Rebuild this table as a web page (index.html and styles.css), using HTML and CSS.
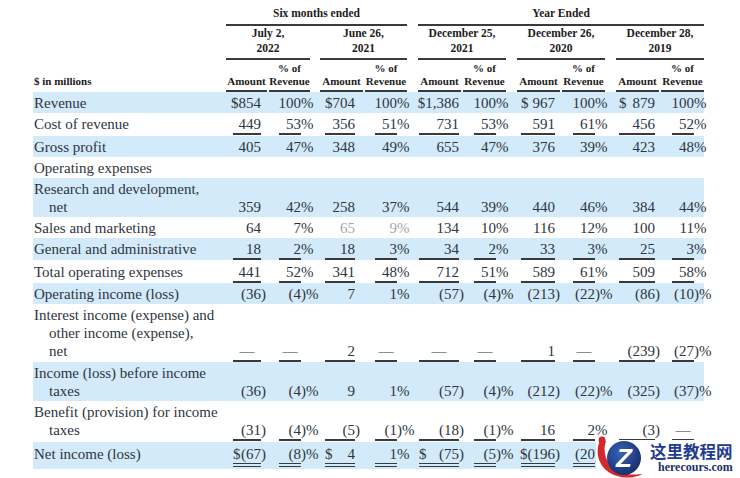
FILE: index.html
```html
<!DOCTYPE html>
<html lang="en">
<head>
<meta charset="utf-8">
<title>Income statement</title>
<link rel="stylesheet" href="styles.css">
</head>
<body>
<div class="page">
  <div class="grid hd hd-a">
    <div class="span six">Six months ended</div>
    <div class="span year">Year Ended</div>
  </div>
  <div class="grid hd hd-b">
    <div class="date d1">July 2,<br>2022</div>
    <div class="date d2">June 26,<br>2021</div>
    <div class="date d3">December 25,<br>2021</div>
    <div class="date d4">December 26,<br>2020</div>
    <div class="date d5">December 28,<br>2019</div>
  </div>
  <div class="grid hd hd-c">
    <div class="units">$ in millions</div>
    <div class="col ah a1">Amount</div><div class="col ph p1">% of<br>Revenue</div>
    <div class="col ah a2">Amount</div><div class="col ph p2">% of<br>Revenue</div>
    <div class="col ah a3">Amount</div><div class="col ph p3">% of<br>Revenue</div>
    <div class="col ah a4">Amount</div><div class="col ph p4">% of<br>Revenue</div>
    <div class="col ah a5">Amount</div><div class="col ph p5">% of<br>Revenue</div>
  </div>

  <div class="grid row band">
    <div class="lbl">Revenue</div>
    <div class="c a1"><span class="b"><span class="cur">$</span>854</span></div>
    <div class="c p p1"><span class="b">100<span class="sfx">%</span></span></div>
    <div class="c a2"><span class="b"><span class="cur">$</span>704</span></div>
    <div class="c p p2"><span class="b">100<span class="sfx">%</span></span></div>
    <div class="c a3"><span class="b"><span class="cur">$</span>1,386</span></div>
    <div class="c p p3"><span class="b">100<span class="sfx">%</span></span></div>
    <div class="c a4"><span class="b"><span class="cur">$</span>967</span></div>
    <div class="c p p4"><span class="b">100<span class="sfx">%</span></span></div>
    <div class="c a5"><span class="b"><span class="cur">$</span>879</span></div>
    <div class="c p p5"><span class="b">100<span class="sfx">%</span></span></div>
  </div>

  <div class="grid row pb2 ul">
    <div class="lbl">Cost of revenue</div>
    <div class="c a1"><span class="b">449</span></div>
    <div class="c p p1"><span class="b">53<span class="sfx">%</span></span></div>
    <div class="c a2"><span class="b">356</span></div>
    <div class="c p p2"><span class="b">51<span class="sfx">%</span></span></div>
    <div class="c a3"><span class="b">731</span></div>
    <div class="c p p3"><span class="b">53<span class="sfx">%</span></span></div>
    <div class="c a4"><span class="b">591</span></div>
    <div class="c p p4"><span class="b">61<span class="sfx">%</span></span></div>
    <div class="c a5"><span class="b">456</span></div>
    <div class="c p p5"><span class="b">52<span class="sfx">%</span></span></div>
  </div>

  <div class="grid row band">
    <div class="lbl">Gross profit</div>
    <div class="c a1"><span class="b">405</span></div>
    <div class="c p p1"><span class="b">47<span class="sfx">%</span></span></div>
    <div class="c a2"><span class="b">348</span></div>
    <div class="c p p2"><span class="b">49<span class="sfx">%</span></span></div>
    <div class="c a3"><span class="b">655</span></div>
    <div class="c p p3"><span class="b">47<span class="sfx">%</span></span></div>
    <div class="c a4"><span class="b">376</span></div>
    <div class="c p p4"><span class="b">39<span class="sfx">%</span></span></div>
    <div class="c a5"><span class="b">423</span></div>
    <div class="c p p5"><span class="b">48<span class="sfx">%</span></span></div>
  </div>

  <div class="grid row">
    <div class="lbl">Operating expenses</div>
  </div>

  <div class="grid row band">
    <div class="lbl">Research and development,<span class="cont">net</span></div>
    <div class="c a1"><span class="b">359</span></div>
    <div class="c p p1"><span class="b">42<span class="sfx">%</span></span></div>
    <div class="c a2"><span class="b">258</span></div>
    <div class="c p p2"><span class="b">37<span class="sfx">%</span></span></div>
    <div class="c a3"><span class="b">544</span></div>
    <div class="c p p3"><span class="b">39<span class="sfx">%</span></span></div>
    <div class="c a4"><span class="b">440</span></div>
    <div class="c p p4"><span class="b">46<span class="sfx">%</span></span></div>
    <div class="c a5"><span class="b">384</span></div>
    <div class="c p p5"><span class="b">44<span class="sfx">%</span></span></div>
  </div>

  <div class="grid row">
    <div class="lbl">Sales and marketing</div>
    <div class="c a1"><span class="b">64</span></div>
    <div class="c p p1"><span class="b">7<span class="sfx">%</span></span></div>
    <div class="c a2 faint"><span class="b">65</span></div>
    <div class="c p p2 faint"><span class="b">9<span class="sfx">%</span></span></div>
    <div class="c a3"><span class="b">134</span></div>
    <div class="c p p3"><span class="b">10<span class="sfx">%</span></span></div>
    <div class="c a4"><span class="b">116</span></div>
    <div class="c p p4"><span class="b">12<span class="sfx">%</span></span></div>
    <div class="c a5"><span class="b">100</span></div>
    <div class="c p p5"><span class="b">11<span class="sfx">%</span></span></div>
  </div>

  <div class="grid row band pb1 ul">
    <div class="lbl">General and administrative</div>
    <div class="c a1"><span class="b">18</span></div>
    <div class="c p p1"><span class="b">2<span class="sfx">%</span></span></div>
    <div class="c a2"><span class="b">18</span></div>
    <div class="c p p2"><span class="b">3<span class="sfx">%</span></span></div>
    <div class="c a3"><span class="b">34</span></div>
    <div class="c p p3"><span class="b">2<span class="sfx">%</span></span></div>
    <div class="c a4"><span class="b">33</span></div>
    <div class="c p p4"><span class="b">3<span class="sfx">%</span></span></div>
    <div class="c a5"><span class="b">25</span></div>
    <div class="c p p5"><span class="b">3<span class="sfx">%</span></span></div>
  </div>

  <div class="grid row pt3 pb1 ul">
    <div class="lbl">Total operating expenses</div>
    <div class="c a1"><span class="b">441</span></div>
    <div class="c p p1"><span class="b">52<span class="sfx">%</span></span></div>
    <div class="c a2"><span class="b">341</span></div>
    <div class="c p p2"><span class="b">48<span class="sfx">%</span></span></div>
    <div class="c a3"><span class="b">712</span></div>
    <div class="c p p3"><span class="b">51<span class="sfx">%</span></span></div>
    <div class="c a4"><span class="b">589</span></div>
    <div class="c p p4"><span class="b">61<span class="sfx">%</span></span></div>
    <div class="c a5"><span class="b">509</span></div>
    <div class="c p p5"><span class="b">58<span class="sfx">%</span></span></div>
  </div>

  <div class="grid row band">
    <div class="lbl">Operating income (loss)</div>
    <div class="c a1"><span class="b">(36<span class="sfx">)</span></span></div>
    <div class="c p p1"><span class="b">(4<span class="sfx">)%</span></span></div>
    <div class="c a2"><span class="b">7</span></div>
    <div class="c p p2"><span class="b">1<span class="sfx">%</span></span></div>
    <div class="c a3"><span class="b">(57<span class="sfx">)</span></span></div>
    <div class="c p p3"><span class="b">(4<span class="sfx">)%</span></span></div>
    <div class="c a4"><span class="b">(213<span class="sfx">)</span></span></div>
    <div class="c p p4"><span class="b">(22<span class="sfx">)%</span></span></div>
    <div class="c a5"><span class="b">(86<span class="sfx">)</span></span></div>
    <div class="c p p5"><span class="b">(10<span class="sfx">)%</span></span></div>
  </div>

  <div class="grid row pb1 ul">
    <div class="lbl">Interest income (expense) and<span class="cont">other income (expense),</span><span class="cont">net</span></div>
    <div class="c a1 dash"><span class="b">—</span></div>
    <div class="c p p1 dash"><span class="b">—</span></div>
    <div class="c a2"><span class="b">2</span></div>
    <div class="c p p2 dash"><span class="b">—</span></div>
    <div class="c a3 dash"><span class="b">—</span></div>
    <div class="c p p3 dash"><span class="b">—</span></div>
    <div class="c a4"><span class="b">1</span></div>
    <div class="c p p4 dash"><span class="b">—</span></div>
    <div class="c a5"><span class="b">(239<span class="sfx">)</span></span></div>
    <div class="c p p5"><span class="b">(27<span class="sfx">)%</span></span></div>
  </div>

  <div class="grid row band">
    <div class="lbl">Income (loss) before income<span class="cont">taxes</span></div>
    <div class="c a1"><span class="b">(36<span class="sfx">)</span></span></div>
    <div class="c p p1"><span class="b">(4<span class="sfx">)%</span></span></div>
    <div class="c a2"><span class="b">9</span></div>
    <div class="c p p2"><span class="b">1<span class="sfx">%</span></span></div>
    <div class="c a3"><span class="b">(57<span class="sfx">)</span></span></div>
    <div class="c p p3"><span class="b">(4<span class="sfx">)%</span></span></div>
    <div class="c a4"><span class="b">(212<span class="sfx">)</span></span></div>
    <div class="c p p4"><span class="b">(22<span class="sfx">)%</span></span></div>
    <div class="c a5"><span class="b">(325<span class="sfx">)</span></span></div>
    <div class="c p p5"><span class="b">(37<span class="sfx">)%</span></span></div>
  </div>

  <div class="grid row pb2 ul">
    <div class="lbl">Benefit (provision) for income<span class="cont">taxes</span></div>
    <div class="c a1"><span class="b">(31<span class="sfx">)</span></span></div>
    <div class="c p p1"><span class="b">(4<span class="sfx">)%</span></span></div>
    <div class="c a2"><span class="b">(5<span class="sfx">)</span></span></div>
    <div class="c p p2"><span class="b">(1<span class="sfx">)%</span></span></div>
    <div class="c a3"><span class="b">(18<span class="sfx">)</span></span></div>
    <div class="c p p3"><span class="b">(1<span class="sfx">)%</span></span></div>
    <div class="c a4"><span class="b">16</span></div>
    <div class="c p p4"><span class="b">2<span class="sfx">%</span></span></div>
    <div class="c a5"><span class="b">(3<span class="sfx">)</span></span></div>
    <div class="c p p5 dash"><span class="b">—</span></div>
  </div>

  <div class="grid row band pt3 pb2 dbl">
    <div class="lbl">Net income (loss)</div>
    <div class="c a1"><span class="b"><span class="cur">$</span>(67<span class="sfx">)</span></span></div>
    <div class="c p p1"><span class="b">(8<span class="sfx">)%</span></span></div>
    <div class="c a2"><span class="b"><span class="cur">$</span>4</span></div>
    <div class="c p p2"><span class="b">1<span class="sfx">%</span></span></div>
    <div class="c a3"><span class="b"><span class="cur">$</span>(75<span class="sfx">)</span></span></div>
    <div class="c p p3"><span class="b">(5<span class="sfx">)%</span></span></div>
    <div class="c a4"><span class="b"><span class="cur">$</span>(196<span class="sfx">)</span></span></div>
    <div class="c p p4"><span class="b">(20<span class="sfx">)%</span></span></div>
    <div class="c a5"><span class="b"></span></div>
    <div class="c p p5"><span class="b"></span></div>
  </div>

  <div class="wm">
    <svg class="wm-logo" width="54" height="38" viewBox="0 0 54 38">
      <defs>
        <radialGradient id="wmg" cx="40%" cy="35%" r="70%">
          <stop offset="0" stop-color="#3b62b6"/>
          <stop offset="1" stop-color="#142d6e"/>
        </radialGradient>
      </defs>
      <g transform="translate(0 -5)">
        <path d="M5 4 C-3 17 3 38 25 42 C35 43.5 43 41.5 47 38.5 C37 41 22 39.5 14 30 C8 22 7.5 13 10 6 Z" fill="#d3282c"/>
        <circle cx="6" cy="5" r="3.4" fill="#d3282c"/>
        <circle cx="28" cy="23" r="17" fill="url(#wmg)"/>
        <text x="28" y="32" text-anchor="middle" class="wm-z">Z</text>
      </g>
    </svg>
    <div class="wm-txt">
      <div class="wm-cn">这里教程网</div>
      <div class="wm-url">herecours.com</div>
    </div>
  </div>
</div>
</body>
</html>
```

FILE: styles.css
```css
* { box-sizing: border-box; }

body {
  margin: 0;
  background: #ffffff;
  font-family: "Liberation Serif", "Times New Roman", serif;
  color: #2f3540;
}

.page {
  position: relative;
  width: 740px;
  height: 478px;
  padding-left: 33px;
  overflow: hidden;
}

.grid {
  display: grid;
  grid-template-columns: 193px 42px 42px 10px 44px 43px 11px 44px 44px 11px 44px 44px 11px 44px 44px;
  width: 671px;
}

/* ---------- header ---------- */
.hd {
  font-weight: 700;
  font-size: 11.5px;
  color: #1c1c1c;
  text-align: center;
}

.hd-a { padding-top: 6px; }
.hd-a .span {
  line-height: 15px;
  padding-bottom: 3px;
  border-bottom: 2px solid #3a3a3a;
}
.six { grid-column: 2 / 7; }
.year { grid-column: 8 / 16; }

.hd-b .date {
  line-height: 15px;
  padding-bottom: 2px;
  border-bottom: 2px solid #3a3a3a;
}
.d1 { grid-column: 2 / 4; }
.d2 { grid-column: 5 / 7; }
.d3 { grid-column: 8 / 10; }
.d4 { grid-column: 11 / 13; }
.d5 { grid-column: 14 / 16; }

.hd-c { font-size: 11px; }
.hd-c .col {
  line-height: 13px;
  padding-top: 1.5px;
  padding-bottom: 2.5px;
  border-bottom: 2px solid #3a3a3a;
  display: flex;
  flex-direction: column;
  justify-content: flex-end;
  white-space: nowrap;
}
.hd-c .ah { margin-right: 1px; }
.hd-c .ph { margin-left: 1px; }
.hd-c .units {
  grid-column: 1;
  text-align: left;
  align-self: end;
  line-height: 13px;
  padding-left: 1px;
  padding-bottom: 4.5px;
}

/* ---------- body rows ---------- */
.row { padding-top: 2px; }
.row.pt3 { padding-top: 3px; }
.row.pb1 { padding-bottom: 1px; }
.row.pb2 { padding-bottom: 2px; }
.band { background: #d2eaf9; }

.lbl {
  grid-column: 1;
  font-size: 15px;
  line-height: 18px;
  padding-left: 1px;
  padding-bottom: 1px;
  white-space: nowrap;
}
.lbl .cont {
  display: block;
  padding-left: 15px;
}

.c {
  font-size: 15px;
  line-height: 18px;
  display: flex;
  justify-content: flex-end;
  align-items: flex-end;
  white-space: nowrap;
}
.a1 { grid-column: 2; }
.p1 { grid-column: 3; }
.a2 { grid-column: 5; }
.p2 { grid-column: 6; }
.a3 { grid-column: 8; }
.p3 { grid-column: 9; }
.a4 { grid-column: 11; }
.p4 { grid-column: 12; }
.a5 { grid-column: 14; }
.p5 { grid-column: 15; }

.b {
  display: flex;
  justify-content: flex-end;
  min-height: 19px;
  border-bottom: 1px solid transparent;
}
.a1 .b { width: 28px; margin-right: 7px; }
.a2 .b { width: 30px; margin-right: 9px; }
.a3 .b { width: 40px; margin-right: 3px; }
.a4 .b { width: 34px; margin-right: 6px; }
.a5 .b { width: 36px; margin-right: 5px; }
.p .b { width: 22px; margin-right: 10px; }
.p1 .b { margin-right: 9px; }

.dash .b { justify-content: center; }
.cur { margin-right: auto; }
.sfx {
  width: 0;
  white-space: nowrap;
}
.faint { color: #a3a8ae; }

.ul .b {
  border-bottom-color: #3a3a3a;
  box-shadow: 0 1px 0 #3a3a3a;
}
.dbl .b {
  min-height: 22px;
  border-bottom: 4px double #3a3a3a;
}

/* ---------- watermark ---------- */
.wm {
  position: absolute;
  left: 596px;
  top: 440px;
  width: 144px;
  height: 38px;
  background: #ffffff;
  display: flex;
}
.wm-logo { flex: none; display: block; overflow: visible; }
.wm-z {
  font-family: "Liberation Sans", Arial, sans-serif;
  font-weight: 700;
  font-style: italic;
  font-size: 26px;
  fill: #ffffff;
}
.wm-txt { padding-top: 3px; }
.wm-cn {
  font-family: "Noto Sans CJK SC", sans-serif;
  font-weight: 700;
  font-size: 16.5px;
  line-height: 16px;
  color: #1f3c8e;
  white-space: nowrap;
}
.wm-url {
  font-family: "Liberation Serif", serif;
  font-weight: 700;
  font-size: 12px;
  line-height: 14px;
  margin-top: 1px;
  padding-left: 8px;
  color: #1d2f6a;
  white-space: nowrap;
}
```
